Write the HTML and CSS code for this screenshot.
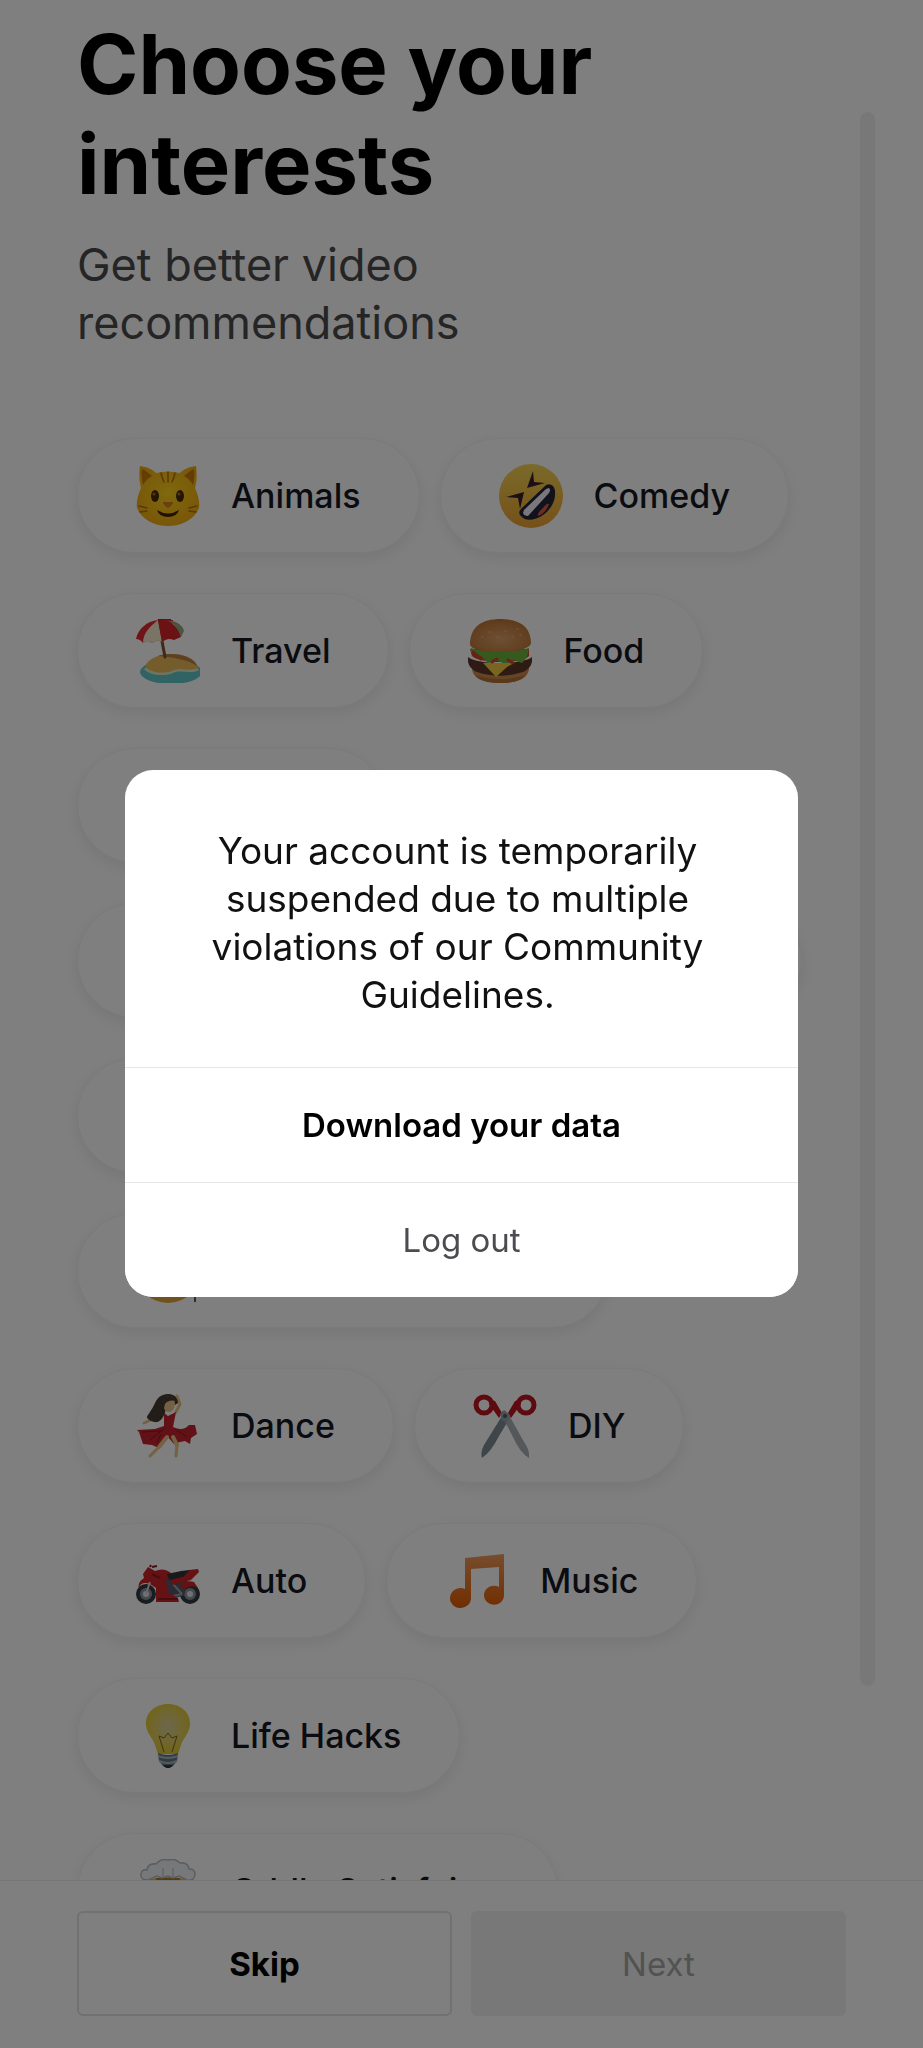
FILE: index.html
```html
<!DOCTYPE html>
<html lang="en">
<head>
<meta charset="utf-8">
<meta name="viewport" content="width=device-width, initial-scale=1">
<title>Choose your interests</title>
<link rel="stylesheet" href="styles.css">
</head>
<body>
<div class="screen">
  <main class="content">
    <h1 class="title">Choose your<br>interests</h1>
    <p class="subtitle">Get better video<br>recommendations</p>
    <div class="interests">
      <button class="pill" type="button">
        <svg class="icon" viewBox="0 0 64 64" aria-hidden="true">
          <defs><radialGradient id="cat" cx=".5" cy=".45" r=".6"><stop offset="0" stop-color="#ffd21c"/><stop offset="1" stop-color="#f0ab10"/></radialGradient></defs>
          <path fill="url(#cat)" d="M4 2c7 1 12 3 16 7 8-2 16-2 24 0 4-4 9-6 16-7 1 8 1 15-1 22 3 7 5 14 4 20-5 12-18 18-31 18S6 56 1 44c-1-6 1-13 4-20C3 16 3 9 4 2z"/>
          <path fill="#c9780c" d="M6 5c4 2 7 4 10 7-4 2-7 5-9 9-1-6-2-11-1-16zM58 5c-4 2-7 4-10 7 4 2 7 5 9 9 1-6 2-11 1-16z"/>
          <path fill="none" stroke="#b8700e" stroke-width="1.500" stroke-linecap="round" d="M25 9q1 5 3 9M32 8v10M39 9q-1 5-3 9M3 42l8 2M4 48l7-1M61 42l-8 2M60 48l-7-1"/>
          <ellipse cx="19" cy="32" rx="4" ry="6" fill="#4a2a0a"/><ellipse cx="44" cy="32" rx="4" ry="6" fill="#4a2a0a"/>
          <circle cx="18" cy="30" r="1.5" fill="#a8702c"/><circle cx="43" cy="30" r="1.5" fill="#a8702c"/>
          <path fill="#d5801c" d="M27 38h10q0 3-5 6-5-3-5-6z"/>
          <path fill="#4a2008" d="M21 46q11 7 22 0-2 7-11 7t-11-7z"/>
        </svg>
        <span>Animals</span>
      </button>
      <button class="pill" type="button">
        <svg class="icon" viewBox="0 0 64 64" aria-hidden="true">
          <defs><linearGradient id="rofl" x1="0" y1="0" x2="0" y2="1"><stop offset="0" stop-color="#f5d454"/><stop offset="1" stop-color="#eca232"/></linearGradient></defs>
          <circle cx="32" cy="32" r="32" fill="url(#rofl)"/>
          <path fill="#37202a" d="M34 7l1 11 11 1-18 5zM7 33l18-5-4 17-2-11z"/>
          <path fill="#232437" stroke="#232437" stroke-width="3" stroke-linejoin="round" d="M51 22c5 1 5 13-1 21-7 10-20 14-26 9-3-2-3-4 0-7L47 23q2-2 4-1z"/>
          <path fill="#f2f2fa" d="M50 24q2 2 0 5L29 52q-4 0-5-3l1-3 22-21z"/>
          <path fill="#d85a4c" d="M50 40q-2-1-6 4-6 5-5 8 8-3 11-12z"/>
        </svg>
        <span>Comedy</span>
      </button>
      <button class="pill" type="button">
        <svg class="icon" viewBox="0 0 64 64" aria-hidden="true">
          <ellipse cx="35" cy="53" rx="31" ry="12" fill="#62c6c8"/>
          <path fill="#d9ebc4" d="M8 50c5-5 50-7 55 1-8 5-18-1-26 3-9 4-25 2-29-4z"/>
          <path fill="#e8b85a" d="M9 47c4-8 15-12 27-12 14 0 25 6 26 14-8 4-18-1-26 3-9 3-22 2-27-5z"/>
          <path fill="#b9813e" d="M22 37c14-5 36 0 39 10-8-6-24-9-39-10z"/>
          <path stroke="#85502c" stroke-width="3" stroke-linecap="round" d="M25 17l4 21"/>
          <path fill="#e02a2e" d="M0 20C2 10 11 2 22 1l15 0-1 19q-5-2-10 3-5-3-10 1-4-4-9 0-3-4-7-4z"/>
          <path fill="#f3e8cc" d="M22 1C13 8 7 15 7 24q5-4 9 0 5-4 10-1z"/>
          <path fill="#d42428" d="M22 1l4 22q5-5 12-2l7-3C44 8 34 1 22 1z"/>
          <path fill="#94ab80" d="M31 1c8 0 16 5 17 11l-3 6C42 9 37 4 31 1z"/>
          <path stroke="#c32226" stroke-width="2" fill="none" d="M22 1q6-2 13 0"/>
        </svg>
        <span>Travel</span>
      </button>
      <button class="pill" type="button">
        <svg class="icon" viewBox="0 0 64 64" aria-hidden="true">
          <defs><radialGradient id="bun" cx=".5" cy=".6" r=".6"><stop offset="0" stop-color="#dca068"/><stop offset="1" stop-color="#bd7434"/></radialGradient></defs>
          <path fill="#cc8a4c" d="M4 46h57c1 9-4 18-28 18S3 56 4 46z"/>
          <path fill="#b57234" d="M7 56q26 8 50 0-4 8-24 8T7 56z"/>
          <path fill="#5a3628" d="M0 38c10 8 54 8 64 0 1 6-2 12-9 15-16 5-30 5-46 0C2 50-1 44 0 38z"/>
          <path fill="#d24428" d="M2 30h59v7c-8 8-48 8-57 0z"/>
          <path fill="#6cb43c" d="M3 29c15 5 42 5 58 0l-2 9-5 6-8-3-9 4-9-4-8 3-7-7-10-3z"/>
          <path fill="#f4c844" d="M15 44h31l-7 4-11 10z"/>
          <path stroke="#d24428" stroke-width="3" stroke-linecap="round" d="M24 43l5-3M40 41l5 3M5 33l8 7"/>
          <path fill="url(#bun)" d="M2 24C3 8 13 0 33 0s30 9 30 24c0 5-13 9-31 9S1 30 2 24z"/>
          <path stroke="#edc08c" stroke-width="1" stroke-linecap="round" d="M14 18h1M21 13h1M29 18h1M37 12h1M44 18h1M52 16h1M49 10h1"/>
        </svg>
        <span>Food</span>
      </button>
      <button class="pill pill-sm" type="button"></button>
      <button class="pill pill-xl" type="button"></button>
      <button class="pill pill-md" type="button"></button>
      <button class="pill pill-lg" type="button">
        <svg class="icon" viewBox="0 0 64 64" aria-hidden="true">
          <circle cx="32" cy="32" r="32" fill="#e2a53c"/>
          <path stroke="#5a5a5a" stroke-width="2" d="M59 32v31"/>
        </svg>
      </button>
      <button class="pill" type="button">
        <svg class="icon" viewBox="0 0 64 64" aria-hidden="true">
          <path stroke="#e8c284" stroke-width="3" stroke-linecap="round" stroke-linejoin="round" fill="none" d="M28 19L17 25l-9 4M40 18l4-8-3-8M32 40l-9 13-9 9M37 42l4 9-1 11"/>
          <path fill="#443a30" d="M27 1c8-3 15 1 15 8l-3 2-7-2-4 12q-4 10-13 6-6-3-3-6Q17 14 20 7q3-5 7-6z"/>
          <ellipse cx="33" cy="10" rx="6" ry="8" fill="#e8c08a"/>
          <path fill="#443a30" d="M26 8q1-7 9-6l6 5q-9-2-12 3l-2 8z"/>
          <path fill="#c4242e" d="M28 19l4 3 8-4-3 15q10 5 16-2l6 0 2 9-6 4-1 6-5-3-5 1-6 2-7-8-8 12-7-3-9-1-4-12-2-2 18-1 9-3z"/>
          <path stroke="#8c1820" stroke-width="1" fill="none" d="M29 34L14 46M25 40l-4 9M39 35l12 8M6 38l20-1"/>
          <path stroke="#e8c284" stroke-width="4" stroke-linecap="round" fill="none" d="M31 43l-8 10M37 43l4 8"/>
        </svg>
        <span>Dance</span>
      </button>
      <button class="pill" type="button">
        <svg class="icon" viewBox="0 0 64 64" aria-hidden="true">
          <path fill="#7d8c94" d="M29 22l6 5-9 15Q18 58 9 64q-2-5 2-13z"/>
          <path fill="#a9b1b5" d="M30 24l6-3 15 27q6 8 5 16-9-5-16-21z"/>
          <path fill="#bb1422" d="M17 6l5 1 7 12-3 5-10-14zM47 6l-5 1-7 12 3 5 10-14z"/>
          <circle cx="11" cy="11" r="8" fill="none" stroke="#bb1422" stroke-width="5"/>
          <circle cx="53" cy="11" r="8" fill="none" stroke="#bb1422" stroke-width="5"/>
          <path fill="#94a0a8" d="M27 20l4-4 6 5-3 7-5-1z"/><circle cx="32" cy="22" r="2" fill="#505860"/>
        </svg>
        <span>DIY</span>
      </button>
      <button class="pill" type="button">
        <svg class="icon" viewBox="0 0 64 64" aria-hidden="true">
          <circle cx="10" cy="45" r="8" fill="#8a929c" stroke="#303a44" stroke-width="4"/><circle cx="54" cy="45" r="8" fill="#8a929c" stroke="#303a44" stroke-width="4"/>
          <circle cx="10" cy="45" r="3" fill="#dfe4ea"/><circle cx="54" cy="45" r="3" fill="#dfe4ea"/>
          <path fill="#565666" d="M27 29l26-3-5 21-17 3z"/>
          <path stroke="#9aa0b0" stroke-width="2" d="M33 48l13-3M37 35l9 10"/>
          <path fill="#cc2226" d="M7 25l5-7 7 4q9-4 16 2l-5 8 2 11 10 6 1 4H20V39l-6-4q-9-3-11 4-2-5 5-10z"/>
          <path fill="#cc2226" d="M33 30l20-9 9-1 1 3-8 8-18 5zM44 38q5-8 14-5l4 6q-7-4-13 1z"/>
          <path fill="#33303a" d="M31 25l14-3 9-1-7 7-14 3z"/>
          <path stroke="#8c1a20" stroke-width="2" fill="none" d="M14 18l1-2M16 18l5-1M16 25l8 4M22 50h20"/>
          <path stroke="#e6c8cc" stroke-width="2" d="M10 45l4-12"/>
        </svg>
        <span>Auto</span>
      </button>
      <button class="pill" type="button">
        <svg class="icon" viewBox="0 0 64 64" aria-hidden="true">
          <defs><linearGradient id="note" x1="0" y1="0" x2="0" y2="1"><stop offset="0" stop-color="#ee9a5c"/><stop offset="1" stop-color="#e35c00"/></linearGradient></defs>
          <path fill="url(#note)" d="M20 9l39-4v41a10 9.500 0 1 1-5-8V18l-28 2v29a10.500 10 0 1 1-6-9z"/>
        </svg>
        <span>Music</span>
      </button>
      <button class="pill" type="button">
        <svg class="icon" viewBox="0 0 64 64" aria-hidden="true">
          <defs><radialGradient id="bulb" cx=".5" cy=".45" r=".55"><stop offset="0" stop-color="#d8cf9c"/><stop offset=".6" stop-color="#e0cc5c"/><stop offset="1" stop-color="#e0cb28"/></radialGradient></defs>
          <path fill="url(#bulb)" d="M32 0c13 0 23 9 22 21-1 9-7 13-9 20l-3 9H22l-3-9c-2-7-8-11-9-20C9 9 19 0 32 0z"/>
          <path fill="none" stroke="#7a6426" stroke-width="1" stroke-linecap="round" stroke-linejoin="round" d="M28 48l-5-16 5 2 4-5 4 5 5-2-5 16"/>
          <path fill="#627680" d="M22 49q10 4 20 0l-1 8-5 6h-8l-5-6z"/>
          <path stroke="#a9b8c0" stroke-width="2" fill="none" d="M22 52q10 4 20 0M23 57q9 4 18 0"/>
          <path fill="#2e3940" d="M27 61h10l-3 3h-4z"/>
        </svg>
        <span>Life Hacks</span>
      </button>
      <button class="pill" type="button">
        <svg class="icon" viewBox="0 0 64 64" aria-hidden="true">
          <path fill="#f0b830" d="M14 20q18-4 36 0 12 10 10 24-4 18-28 20Q8 62 4 44 2 30 14 20z"/>
          <path fill="#b07820" d="M20 19h24v6H20z"/>
          <path fill="#eef0f2" stroke="#b4bcc2" stroke-width="1.500" d="M12 21q-8 0-7-6 1-5 6-4 1-7 9-6 5-6 12-4 7-2 12 3 8-1 9 6 6 0 6 5 0 7-8 6l-8-4-6 2-5-2-6 2-5-2z"/>
          <path stroke="#ced4d8" stroke-width="2" d="M27 9v9M37 9v9"/>
        </svg>
        <span>Oddly Satisfying</span>
      </button>
    </div>
  </main>
  <footer class="actions">
    <button class="action action-skip" type="button">Skip</button>
    <button class="action action-next" type="button" disabled>Next</button>
  </footer>
  <div class="scrollbar"></div>
</div>
<div class="overlay">
  <div class="dialog" role="alertdialog" aria-modal="true" aria-describedby="message">
    <p class="message" id="message">Your account is temporarily suspended due to multiple violations of our Community Guidelines.</p>
    <button class="choice choice-primary" type="button">Download your data</button>
    <button class="choice" type="button">Log out</button>
  </div>
</div>
</body>
</html>
```
FILE: styles.css
```css
* {
  box-sizing: border-box;
}

body {
  margin: 0;
  background: #fff;
  font-family: Inter, "Liberation Sans", sans-serif;
}

button {
  margin: 0;
  font-family: inherit;
}

.screen {
  display: flex;
  flex-direction: column;
  height: 100vh;
  position: relative;
}

.content {
  flex: 1;
  min-height: 0;
  overflow: hidden;
  padding: 14px 77px 0;
}

.title {
  margin: 0 0 22px;
  font-size: 83px;
  line-height: 100px;
  font-weight: 700;
  color: #000;
}

.subtitle {
  margin: 0 0 86px;
  font-size: 45px;
  line-height: 58px;
  color: #4a4a4c;
}

.interests {
  display: flex;
  flex-wrap: wrap;
  gap: 40px 20px;
}

.pill {
  display: flex;
  align-items: center;
  gap: 31px;
  height: 115px;
  padding: 0 58px;
  border: 1px solid #f4f4f4;
  border-radius: 58px;
  background: #fff;
  box-shadow: 0 5px 16px rgba(0, 0, 0, 0.08);
  color: #161823;
  font-size: 34px;
  font-weight: 500;
  white-space: nowrap;
}

.pill-sm {
  width: 309px;
}

.pill-md {
  width: 400px;
}

.pill-lg {
  width: 532px;
}

.pill-xl {
  width: 725px;
}

.icon {
  display: block;
  flex: none;
  width: 64px;
  height: 64px;
}

.actions {
  display: flex;
  gap: 19px;
  padding: 30px 77px 32px;
  border-top: 1px solid #ececec;
  background: #fff;
}

.action {
  flex: 1;
  height: 105px;
  border: 2px solid #e3e3e4;
  border-radius: 6px;
  background: #fff;
  font-size: 33px;
}

.action-skip {
  color: #000;
  font-weight: 700;
}

.action-next {
  border-color: #f0f0f0;
  background: #f0f0f0;
  color: #a4a4a6;
  font-weight: 400;
}

.scrollbar {
  position: absolute;
  top: 112px;
  right: 48px;
  bottom: 362px;
  width: 15px;
  border-radius: 8px;
  background: #f0f0f0;
}

.overlay {
  position: fixed;
  inset: 0;
  display: flex;
  align-items: center;
  justify-content: center;
  padding-top: 18px;
  background: rgba(0, 0, 0, 0.5);
}

.dialog {
  width: 73%;
  overflow: hidden;
  border-radius: 28px;
  background: #fff;
}

.message {
  margin: 0;
  padding: 57px 80px 48px 72px;
  font-size: 37px;
  line-height: 48px;
  text-align: center;
  color: #111;
}

.choice {
  display: block;
  width: 100%;
  height: 115px;
  padding: 0;
  border: 0;
  border-top: 1px solid #e6e6e8;
  background: #fff;
  color: #4c4c50;
  font-size: 33px;
}

.choice-primary {
  color: #000;
  font-weight: 600;
}
```
